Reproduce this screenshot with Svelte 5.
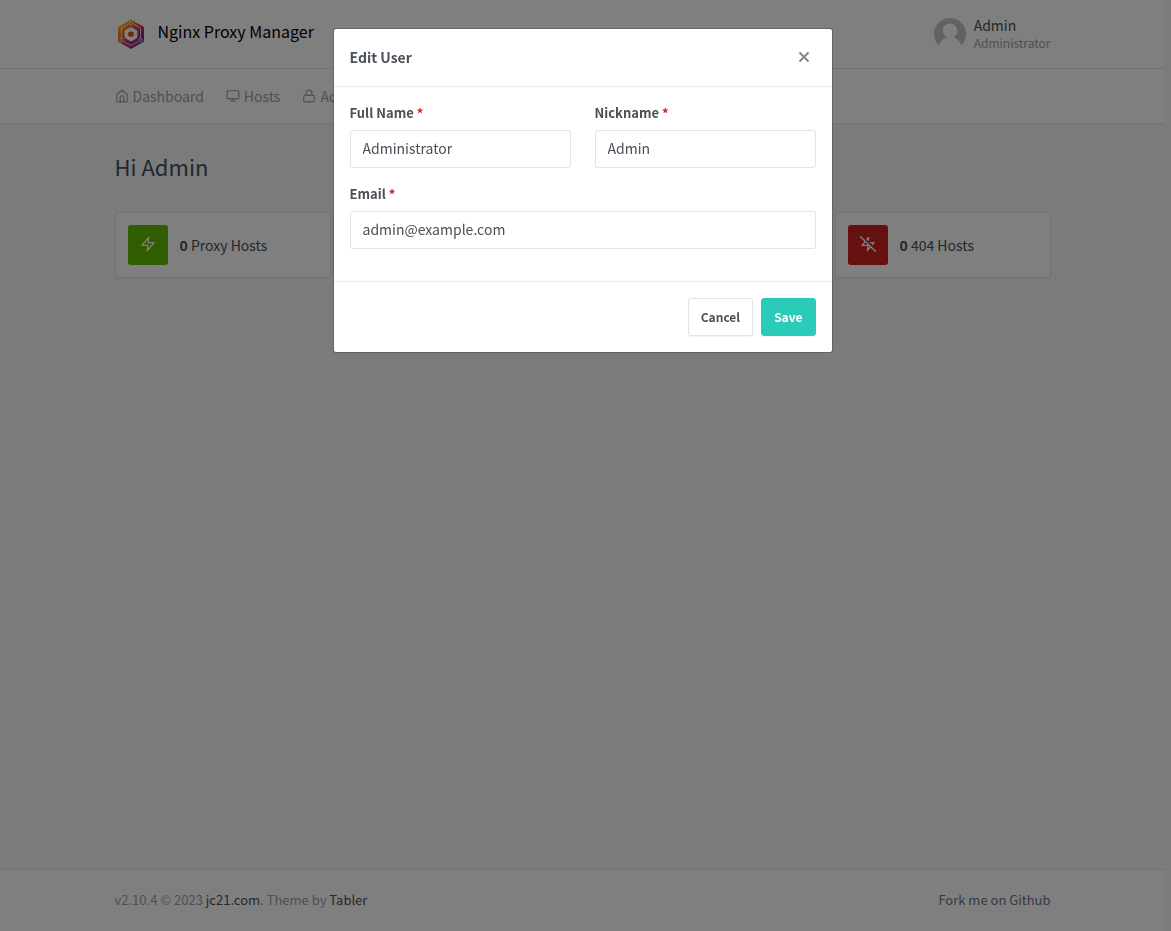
<script lang="ts">
	const navItems = [
		{ label: 'Dashboard', icon: 'home' },
		{ label: 'Hosts', icon: 'monitor' },
		{ label: 'Access Lists', icon: 'lock' },
		{ label: 'SSL Certificates', icon: 'shield' },
		{ label: 'Users', icon: 'users' },
		{ label: 'Audit Log', icon: 'book' }
	];

	const stats = [
		{ count: 0, label: 'Proxy Hosts', color: 'green', icon: 'zap' },
		{ count: 0, label: 'Redirection Hosts', color: 'yellow', icon: 'shuffle' },
		{ count: 0, label: 'Streams', color: 'blue', icon: 'radio' },
		{ count: 0, label: '404 Hosts', color: 'red', icon: 'zap-off' }
	];

	const icons: Record<string, string> = {
		home: '<path d="M3 9l9-7 9 7v11a2 2 0 0 1-2 2H5a2 2 0 0 1-2-2z"/><path d="M9 22V12h6v10"/>',
		monitor: '<rect x="2" y="3" width="20" height="14" rx="2"/><path d="M8 21h8M12 17v4"/>',
		lock: '<rect x="3" y="11" width="18" height="11" rx="2"/><path d="M7 11V7a5 5 0 0 1 10 0v4"/>',
		shield: '<path d="M12 22s8-4 8-10V5l-8-3-8 3v7c0 6 8 10 8 10z"/>',
		users: '<path d="M17 21v-2a4 4 0 0 0-4-4H5a4 4 0 0 0-4 4v2"/><circle cx="9" cy="7" r="4"/><path d="M23 21v-2a4 4 0 0 0-3-3.87M16 3.13a4 4 0 0 1 0 7.75"/>',
		book: '<path d="M2 3h6a4 4 0 0 1 4 4v14a3 3 0 0 0-3-3H2zM22 3h-6a4 4 0 0 0-4 4v14a3 3 0 0 1 3-3h7z"/>',
		zap: '<path d="M13 2L3 14h9l-1 8 10-12h-9z"/>',
		'zap-off': '<path d="M12.41 6.75L13 2l-2.43 2.92M18.57 12.91L21 10h-5.34M8 8l-5 6h9l-1 8 5-6M1 1l22 22"/>',
		shuffle: '<path d="M16 3h5v5M4 20L21 3M21 16v5h-5M15 15l6 6M4 4l5 5"/>',
		radio: '<circle cx="12" cy="12" r="2"/><path d="M16.24 7.76a6 6 0 0 1 0 8.49M7.76 16.24a6 6 0 0 1 0-8.49"/>'
	};

	let open = $state(true);
	let user = $state({ name: 'Administrator', nickname: 'Admin', email: 'admin@example.com' });

	function close() {
		open = false;
	}

	function save(e: SubmitEvent) {
		e.preventDefault();
		close();
	}
</script>

{#snippet icon(name: string)}
	<svg class="icon" viewBox="0 0 24 24" aria-hidden="true">{@html icons[name]}</svg>
{/snippet}

<div class="page">
	<header class="header">
		<div class="container header-row">
			<a class="brand" href="#home">
				<svg class="logo" viewBox="0 0 32 32" aria-hidden="true">
					<defs>
						<linearGradient id="logo-fill" x1="0.1" y1="0.1" x2="0.8" y2="0.9">
							<stop offset="0" stop-color="#fbc21b" />
							<stop offset="0.35" stop-color="#f0652f" />
							<stop offset="0.65" stop-color="#b72a6e" />
							<stop offset="1" stop-color="#6a2a8c" />
						</linearGradient>
					</defs>
					<path d="M16 1.500L29 9v14.500L16 31 3 23.500V9z" fill="url(#logo-fill)" />
					<g fill="none" stroke="#fff" stroke-opacity="0.75">
						<path d="M13.500 5.800L6.500 10v10.500M18.500 5.800L25.500 10v10.500M8.500 23.500L16 27.500l7.500-4" />
						<circle cx="16" cy="5" r="1.700" />
						<circle cx="6.500" cy="22" r="1.700" />
						<circle cx="25.500" cy="22" r="1.700" />
					</g>
					<path d="M16 11l4.600 2.600v5.200L16 21.400l-4.600-2.600v-5.200z" fill="#e8432e" stroke="#fff" stroke-width="3.600" stroke-linejoin="round" />
				</svg>
				Nginx Proxy Manager
			</a>
			<a class="account" href="#profile">
				<svg class="avatar" viewBox="0 0 32 32" aria-hidden="true">
					<circle cx="16" cy="16" r="16" fill="#c5c5c5" />
					<path d="M4.500 27.500Q8 20 13 19.500A7.300 7.300 0 1 1 19 19.500Q24 20 27.500 27.500Q23 32.500 16 32.500T4.500 27.500z" fill="#fff" />
				</svg>
				<span class="account-text">
					<span class="account-name">Admin</span>
					<small>Administrator</small>
				</span>
			</a>
		</div>
	</header>

	<nav class="menu">
		<ul class="container">
			{#each navItems as item}
				<li><a href="#{item.icon}">{@render icon(item.icon)}{item.label}</a></li>
			{/each}
		</ul>
	</nav>

	<main class="container">
		<h1>Hi Admin</h1>
		<div class="stats">
			{#each stats as stat}
				<a class="card" href="#{stat.icon}">
					<span class="stamp {stat.color}">{@render icon(stat.icon)}</span>
					<span><strong>{stat.count}</strong> {stat.label}</span>
				</a>
			{/each}
		</div>
	</main>

	<footer class="footer">
		<div class="container footer-row">
			<span>v2.10.4 © 2023 <a href="#jc21">jc21.com</a>. Theme by <a href="#tabler">Tabler</a></span>
			<a href="#github">Fork me on Github</a>
		</div>
	</footer>
</div>

{#if open}
	<div class="backdrop">
		<div class="modal" role="dialog" aria-modal="true" aria-labelledby="modal-title">
			<form onsubmit={save}>
				<div class="modal-header">
					<h2 id="modal-title">Edit User</h2>
					<button type="button" class="close" aria-label="Close" onclick={close}>
						<svg viewBox="0 0 12 12" aria-hidden="true"><path d="M1.500 1.500l9 9M10.500 1.500l-9 9" /></svg>
					</button>
				</div>
				<div class="modal-body">
					<div class="field">
						<label for="name">Full Name <span class="required">*</span></label>
						<input id="name" type="text" bind:value={user.name} required />
					</div>
					<div class="field">
						<label for="nickname">Nickname <span class="required">*</span></label>
						<input id="nickname" type="text" bind:value={user.nickname} required />
					</div>
					<div class="field wide">
						<label for="email">Email <span class="required">*</span></label>
						<input id="email" type="email" bind:value={user.email} required />
					</div>
				</div>
				<div class="modal-footer">
					<button type="button" class="btn" onclick={close}>Cancel</button>
					<button type="submit" class="btn primary">Save</button>
				</div>
			</form>
		</div>
	</div>
{/if}

<style>
	:global(body) {
		background: #f5f7fb;
		color: #495057;
		font-family: 'Source Sans Pro', 'Noto Sans CJK SC', sans-serif;
		font-size: 14px;
		line-height: 22px;
	}

	.page,
	.page *,
	.backdrop,
	.backdrop * {
		box-sizing: border-box;
	}

	a {
		color: inherit;
		text-decoration: none;
	}

	.page {
		display: flex;
		flex-direction: column;
		min-height: 100vh;
		margin-right: 6px;
	}

	.container {
		width: 100%;
		max-width: 960px;
		margin: 0 auto;
		padding: 0 12px;
	}

	.icon {
		width: 14px;
		height: 14px;
		fill: none;
		stroke: currentColor;
		stroke-width: 2;
		stroke-linecap: round;
		stroke-linejoin: round;
	}

	.header,
	.menu {
		background: #fff;
		border-bottom: 1px solid rgba(0, 40, 100, 0.12);
	}

	.header-row {
		display: flex;
		align-items: center;
		justify-content: space-between;
		height: 68px;
	}

	.brand {
		display: flex;
		gap: 11px;
		color: #000;
		font-size: 16px;
		line-height: 26px;
	}

	.logo {
		width: 32px;
		height: 32px;
	}

	.account {
		display: flex;
		align-items: center;
		gap: 8px;
	}

	.avatar {
		width: 32px;
		height: 32px;
	}

	.account-text {
		display: flex;
		flex-direction: column;
		line-height: 18px;
	}

	.account small {
		color: #9aa0ac;
		font-size: 12px;
	}

	.menu ul {
		display: flex;
		gap: 22px;
		list-style: none;
	}

	.menu a {
		display: flex;
		align-items: center;
		gap: 4px;
		height: 54px;
		color: #9aa0ac;
	}

	main {
		flex: 1;
	}

	h1 {
		margin: 26px 0 30px;
		font-size: 22px;
		font-weight: 400;
		line-height: 32px;
	}

	.stats {
		display: grid;
		grid-template-columns: repeat(4, 1fr);
		gap: 24px;
	}

	.card {
		display: flex;
		align-items: center;
		gap: 12px;
		padding: 12px;
		background: #fff;
		border: 1px solid rgba(0, 40, 100, 0.12);
		border-radius: 3px;
		box-shadow: 0 1px 2px rgba(0, 0, 0, 0.05);
	}

	.stamp {
		display: grid;
		place-items: center;
		width: 40px;
		height: 40px;
		padding-bottom: 2px;
		border-radius: 3px;
		color: #fff;
	}

	.stamp :global(.icon) {
		width: 16px;
		height: 16px;
	}

	.green {
		background: #5eba00;
	}

	.yellow {
		background: #f1c40f;
	}

	.blue {
		background: #467fcf;
	}

	.red {
		background: #cd201f;
	}

	.footer {
		background: #fff;
		border-top: 1px solid rgba(0, 40, 100, 0.12);
		color: #9aa0ac;
		font-size: 13px;
	}

	.footer-row {
		display: flex;
		align-items: center;
		justify-content: space-between;
		height: 61px;
		padding-bottom: 2px;
	}

	.footer a {
		color: #6e7687;
	}

	.footer span a {
		color: #495057;
	}

	.backdrop {
		position: fixed;
		inset: 0;
		padding: 28px 6px 28px 0;
		overflow: auto;
		background: rgba(0, 0, 0, 0.5);
	}

	.modal {
		width: 100%;
		max-width: 500px;
		margin: 0 auto;
		background: #fff;
		background-clip: padding-box;
		border: 1px solid rgba(0, 0, 0, 0.2);
		border-radius: 3px;
	}

	.modal-header {
		display: flex;
		align-items: center;
		justify-content: space-between;
		height: 58px;
		padding: 0 16px 2px;
		border-bottom: 1px solid #e9ecef;
	}

	h2 {
		margin: 0;
		font-size: 14px;
		font-weight: 700;
	}

	.close {
		display: grid;
		place-items: center;
		width: 24px;
		height: 24px;
		padding: 0;
		background: none;
		border: 0;
		cursor: pointer;
	}

	.close svg {
		width: 12px;
		height: 12px;
		fill: none;
		stroke: #868686;
		stroke-width: 2;
	}

	.modal-body {
		display: grid;
		grid-template-columns: 1fr 1fr;
		gap: 16px 24px;
		padding: 16px 16px 32px;
	}

	.wide {
		grid-column: 1 / -1;
	}

	label {
		display: block;
		margin-bottom: 8px;
		font-size: 13px;
		font-weight: 700;
		line-height: 19px;
	}

	.required {
		color: #cd201f;
	}

	input {
		display: block;
		width: 100%;
		height: 38px;
		padding: 0 12px 2px;
		background: #fff;
		border: 1px solid rgba(0, 40, 100, 0.12);
		border-radius: 3px;
		color: #495057;
		font: inherit;
	}

	input:focus {
		border-color: #1991eb;
		outline: 0;
	}

	.modal-footer {
		display: flex;
		justify-content: flex-end;
		gap: 8px;
		padding: 16px;
		border-top: 1px solid #e9ecef;
	}

	.btn {
		height: 38px;
		padding: 0 12px 2px;
		background: #fff;
		border: 1px solid rgba(0, 40, 100, 0.12);
		border-radius: 3px;
		box-shadow: 0 1px 1px rgba(0, 0, 0, 0.05);
		color: #495057;
		font-family: inherit;
		font-size: 12px;
		font-weight: 700;
		cursor: pointer;
	}

	.primary {
		background: #2bcbba;
		border-color: #2bcbba;
		color: #fff;
	}
</style>
